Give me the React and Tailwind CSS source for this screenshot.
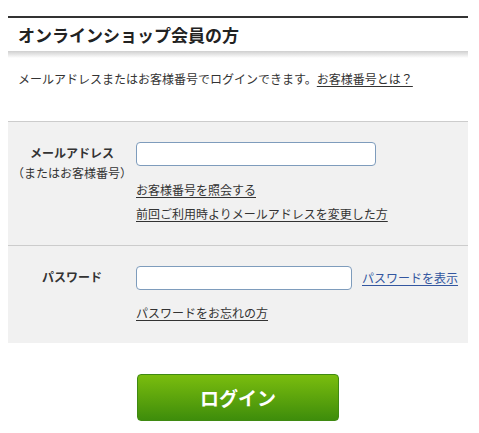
import React from 'react';

export default function App() {
  return (
    <div className="bg-white min-h-[433px] pt-4 font-['Meiryo','Noto_Sans_CJK_JP',sans-serif] text-[#333]">
      <div className="ml-2 w-[460px]">
        {/* Title */}
        <div className="border-t-2 border-[#333]">
          <h2 className="h-[33px] pl-[10px] flex items-center text-[17px] font-bold leading-none text-[#222]">
            オンラインショップ会員の方
          </h2>
          <div className="h-[7px] bg-gradient-to-b from-[#cfcfcf] to-white" />
        </div>

        {/* Intro */}
        <p className="pl-[10px] pt-[12px] pb-[33px] text-[12px] leading-[18px]">
          メールアドレスまたはお客様番号でログインできます。
          <a href="#" className="underline underline-offset-2">お客様番号とは？</a>
        </p>

        {/* Form */}
        <div className="bg-[#f1f1f1] border-t border-[#cccccc]">
          <div className="flex pt-[20px] pb-[19px] border-b border-[#cccccc]">
            <div className="w-[128px] shrink-0 text-center text-[12px]">
              <div className="font-bold leading-[20px] pt-px">メールアドレス</div>
              <div className="leading-[20px]">（またはお客様番号）</div>
            </div>
            <div className="flex flex-col text-[12px]">
              <input
                type="text"
                className="w-[240px] h-[24px] bg-white border border-[#7e9cbc] rounded-[4px] outline-none"
              />
              <a href="#" className="mt-[12px] leading-[24px] underline underline-offset-2">お客様番号を照会する</a>
              <a href="#" className="leading-[24px] underline underline-offset-2">前回ご利用時よりメールアドレスを変更した方</a>
            </div>
          </div>

          <div className="flex pt-[20px] pb-[18px]">
            <div className="w-[128px] shrink-0 text-center text-[12px] font-bold leading-[20px] pt-px">
              パスワード
            </div>
            <div className="flex flex-col text-[12px]">
              <div className="flex items-center">
                <input
                  type="password"
                  className="w-[216px] h-[24px] bg-white border border-[#7e9cbc] rounded-[4px] outline-none"
                />
                <a href="#" className="ml-[10px] text-[#33569f] underline underline-offset-2 leading-[18px]">パスワードを表示</a>
              </div>
              <a href="#" className="mt-[11px] leading-[24px] underline underline-offset-2">パスワードをお忘れの方</a>
            </div>
          </div>
        </div>

        {/* Login */}
        <div className="flex justify-center pt-[31px]">
          <button className="w-[202px] h-[47px] rounded-[4px] border border-[#3f8a12] bg-gradient-to-b from-[#7abd0e] to-[#3e8d0b] text-white text-[19px] font-bold leading-none">
            ログイン
          </button>
        </div>
      </div>
    </div>
  );
}
